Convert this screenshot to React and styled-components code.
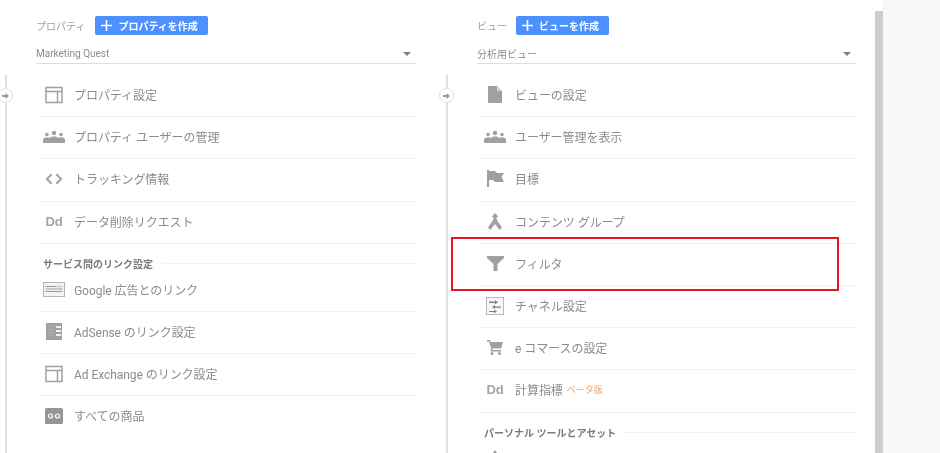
import React from "react";
import styled, { createGlobalStyle } from "styled-components";

const GlobalStyle = createGlobalStyle`
  html, body {
    margin: 0;
    padding: 0;
    background: #fff;
  }
  body {
    font-family: Roboto, "Noto Sans CJK JP", sans-serif;
  }
`;

const Page = styled.div`
  position: relative;
  display: flex;
  width: 940px;
  height: 453px;
  overflow: hidden;
  background: #fff;
`;

const Main = styled.div`
  display: flex;
  gap: 31px;
  width: 875px;
  box-sizing: border-box;
  padding: 16px 0 0 6px;
  filter: blur(0.5px);
`;

const Column = styled.section`
  width: ${(p) => p.$width}px;
  flex: none;
`;

const ColumnHead = styled.div`
  padding-left: 30px;
`;

const TitleRow = styled.div`
  display: flex;
  align-items: center;
  gap: ${(p) => p.$gap}px;
  height: 19px;
`;

const TitleLabel = styled.span`
  font-size: 10px;
  color: #a0a0a0;
`;

const CreateButton = styled.button`
  display: flex;
  align-items: center;
  gap: 6px;
  height: 19px;
  padding: 0 10px 0 6px;
  border: 0;
  border-radius: 2px;
  background: #4d90fe;
  color: #fff;
  font-family: inherit;
  font-size: 10px;
  font-weight: 700;
`;

const Picker = styled.div`
  display: flex;
  align-items: center;
  justify-content: space-between;
  height: 20px;
  margin-top: 9px;
  box-sizing: border-box;
  padding: 1px 5px 1px 0;
  border-bottom: 1px solid #ddd;
  font-size: 10px;
  color: #8c8c8c;
`;

const Caret = styled.span`
  width: 0;
  height: 0;
  border-left: 4px solid transparent;
  border-right: 4px solid transparent;
  border-top: 4px solid #808080;
`;

const Rail = styled.div`
  position: relative;
  margin-top: 11px;
  padding-left: 32px;
  height: 400px;
`;

const RailLine = styled.div`
  position: absolute;
  left: -1px;
  top: 0;
  bottom: 0;
  width: 2px;
  background: #e0e0e0;
`;

const RailBadge = styled.div`
  position: absolute;
  left: -8px;
  top: 13px;
  display: flex;
  align-items: center;
  justify-content: center;
  width: 15px;
  height: 15px;
  box-sizing: border-box;
  border: 1px solid #dfdfdf;
  border-radius: 50%;
  background: #fff;
`;

const Row = styled.div`
  display: flex;
  align-items: center;
  height: 42.2px;
  box-sizing: border-box;
  padding: 0 0 2px 7px;
  border-bottom: 1px solid ${(p) => (p.$last ? "transparent" : "#f1f1f1")};
  font-size: 12px;
  letter-spacing: -0.05px;
  color: #8c8c8c;
  white-space: pre;
`;

const IconSlot = styled.span`
  display: flex;
  align-items: center;
  justify-content: center;
  flex: none;
  width: 18px;
  height: 18px;
  margin-right: 11px;
  color: #a0a0a0;
`;

const DdMark = styled.span`
  font-family: "Liberation Sans", sans-serif;
  font-size: 13px;
  font-weight: 700;
  color: #a4a4a4;
`;

const Beta = styled.span`
  margin-left: 4px;
  font-size: 9px;
  color: #f0a468;
`;

const SectionTitle = styled.div`
  display: flex;
  align-items: center;
  gap: 9px;
  height: 26px;
  box-sizing: border-box;
  padding: 14px 0 0 5px;
  font-size: 10px;
  font-weight: 700;
  color: #7a7a7a;
  white-space: pre;
  &::after {
    content: "";
    flex: 1;
    height: 1px;
    background: #f1f1f1;
  }
`;

const ScrollTrack = styled.div`
  flex: none;
  width: 8px;
  margin-top: 11px;
  background: #cdcdcd;
`;

const SidePanel = styled.div`
  flex: 1;
  background: #f8f8f8;
`;

const Highlight = styled.div`
  position: absolute;
  left: 451px;
  top: 237px;
  width: 388px;
  height: 54px;
  box-sizing: border-box;
  border: 2px solid #e5141f;
`;

const icons = {
  layout: (
    <svg width="18" height="18" viewBox="0 0 18 18" fill="none" stroke="currentColor" strokeWidth="1.5">
      <rect x="1" y="1.5" width="16" height="15" />
      <path d="M1 5.500h16M12.500 5.500v11" />
    </svg>
  ),
  people: (
    <svg width="22" height="14" viewBox="0 0 22 14" fill="currentColor" style={{ flex: "none" }}>
      <circle cx="4" cy="4.500" r="1.800" />
      <circle cx="11" cy="3" r="2.200" />
      <circle cx="18" cy="4.500" r="1.800" />
      <path d="M0 13v-3.200c0-1.600 2-2.600 4-2.600 1 0 2 .2 2.700.7C7.800 7 9.500 6.500 11 6.500s3.200.5 4.300 1.400c.7-.5 1.700-.7 2.700-.7 2 0 4 1 4 2.600V13z" />
    </svg>
  ),
  code: (
    <svg width="19" height="12" viewBox="0 0 19 12" fill="none" stroke="currentColor" strokeWidth="2">
      <path d="M7 1 2 6l5 5M12 1l5 5-5 5" />
    </svg>
  ),
  ads: (
    <svg width="22" height="15" viewBox="0 0 22 15" style={{ flex: "none" }}>
      <rect x=".5" y=".5" width="21" height="14" fill="#f3f3f3" stroke="#b4b4b4" />
      <path d="M2.500 4h11v1h-11zM2.500 6.500h17v1h-17zM2.500 9h17v1h-17z" fill="#9a9a9a" />
      <path d="M14 3.500h5.500v2H14z" fill="#d2d2d2" />
    </svg>
  ),
  adsense: (
    <svg width="18" height="17" viewBox="0 0 18 17" fill="currentColor">
      <path d="M1 0h16v17H1z" />
      <path d="M11 3h5v2h-5zM11 7h5v2h-5zM11 11h5v2h-5z" fill="#f2f2f2" />
      <path d="M3 3h6v.7H3zM3 6h6v.7H3zM3 9h6v.7H3zM3 12h6v.7H3z" fill="#b4b4b4" />
    </svg>
  ),
  products: (
    <svg width="18" height="16" viewBox="0 0 18 16">
      <rect width="18" height="16" rx="1.500" fill="#969696" />
      <g fill="none" stroke="#fff" strokeWidth="1.200">
        <circle cx="5.500" cy="8" r="2" />
        <circle cx="12.500" cy="8" r="2" />
      </g>
    </svg>
  ),
  doc: (
    <svg width="14" height="17" viewBox="0 0 14 17" fill="currentColor">
      <path d="M1 0h8l5 5v11a1 1 0 0 1-1 1H1a1 1 0 0 1-1-1V1a1 1 0 0 1 1-1z" />
      <path d="M9 0v5h5z" fill="#d6d6d6" />
    </svg>
  ),
  flag: (
    <svg width="17" height="17" viewBox="0 0 17 17" fill="currentColor">
      <path d="M0 0h2v17H0zM2 1h6l2 2h7l-2.500 4 2.500 5H8l-2-2H2z" />
    </svg>
  ),
  merge: (
    <svg width="14" height="17" viewBox="0 0 14 17" fill="currentColor">
      <path d="M7 0l3.500 4H8.600v2.500L14 14.500 11.700 17 7 11 2.300 17 0 14.500 5.400 6.500V4H3.500z" />
    </svg>
  ),
  funnel: (
    <svg width="17" height="15" viewBox="0 0 17 15" fill="currentColor">
      <path d="M0 0h17v2l-6.500 6v7h-4V8L0 2z" />
    </svg>
  ),
  channel: (
    <svg width="18" height="18" viewBox="0 0 18 18">
      <rect x=".5" y=".5" width="17" height="17" fill="#f8f8f8" stroke="#b8b8b8" />
      <path d="M3 4.500h6V3l3 2.200-3 2.200V6H3zM15 9.500H9V8L6 10l3 2v-1.200h6zM3 14h5v-1.300l3 1.800-3 1.800V15H3z" fill="#808080" />
    </svg>
  ),
  cart: (
    <svg width="16" height="15" viewBox="0 0 16 15" fill="currentColor">
      <path d="M0 0h3l.6 2H16l-1.800 6.500H5.200L5.600 10H14v1.500H3.500L4 8 2 1.500H0z" />
      <circle cx="5" cy="13.500" r="1.500" />
      <circle cx="12.500" cy="13.500" r="1.500" />
    </svg>
  ),
  peek: (
    <svg width="14" height="16" viewBox="0 0 14 16" fill="currentColor">
      <path d="M7 0l2 3H5z" />
    </svg>
  ),
};

function ItemRow({ icon, text, beta, last }) {
  return (
    <Row $last={last}>
      <IconSlot>{icon === "dd" ? <DdMark>Dd</DdMark> : icons[icon]}</IconSlot>
      {text}
      {beta && <Beta>{beta}</Beta>}
    </Row>
  );
}

function SettingsColumn({ title, titleGap, width, button, picker, groups }) {
  return (
    <Column $width={width}>
      <ColumnHead>
        <TitleRow $gap={titleGap}>
          <TitleLabel>{title}</TitleLabel>
          <CreateButton type="button">
            <svg width="11" height="11" viewBox="0 0 11 11" fill="none" stroke="#fff" strokeWidth="1.600">
              <path d="M5.500 0v11M0 5.500h11" />
            </svg>
            {button}
          </CreateButton>
        </TitleRow>
        <Picker>
          {picker}
          <Caret />
        </Picker>
      </ColumnHead>
      <Rail>
        <RailLine />
        <RailBadge>
          <svg width="7" height="6" viewBox="0 0 7 6" fill="#9a9a9a">
            <path d="M0 2h3.500V0L7 3 3.500 6V4H0z" />
          </svg>
        </RailBadge>
        {groups.map((group) => (
          <React.Fragment key={group.title || "main"}>
            {group.title && <SectionTitle>{group.title}</SectionTitle>}
            {group.rows.map((row) => (
              <ItemRow key={row.icon + row.text} {...row} />
            ))}
          </React.Fragment>
        ))}
      </Rail>
    </Column>
  );
}

const propertyGroups = [
  {
    rows: [
      { icon: "layout", text: "プロパティ設定" },
      { icon: "people", text: "プロパティ ユーザーの管理" },
      { icon: "code", text: "トラッキング情報" },
      { icon: "dd", text: "データ削除リクエスト" },
    ],
  },
  {
    title: "サービス間のリンク設定",
    rows: [
      { icon: "ads", text: "Google 広告とのリンク" },
      { icon: "adsense", text: "AdSense のリンク設定" },
      { icon: "layout", text: "Ad Exchange のリンク設定" },
      { icon: "products", text: "すべての商品", last: true },
    ],
  },
];

const viewGroups = [
  {
    rows: [
      { icon: "doc", text: "ビューの設定" },
      { icon: "people", text: "ユーザー管理を表示" },
      { icon: "flag", text: "目標" },
      { icon: "merge", text: "コンテンツ グループ" },
      { icon: "funnel", text: "フィルタ" },
      { icon: "channel", text: "チャネル設定" },
      { icon: "cart", text: "e コマースの設定" },
      { icon: "dd", text: "計算指標", beta: "ベータ版" },
    ],
  },
  {
    title: "パーソナル ツールとアセット",
    rows: [{ icon: "peek", text: "", last: true }],
  },
];

export default function App() {
  return (
    <Page>
      <GlobalStyle />
      <Main>
        <SettingsColumn
          title="プロパティ"
          titleGap={10}
          width={410}
          button="プロパティを作成"
          picker="Marketing Quest"
          groups={propertyGroups}
        />
        <SettingsColumn
          title="ビュー"
          titleGap={9}
          width={409}
          button="ビューを作成"
          picker="分析用ビュー"
          groups={viewGroups}
        />
      </Main>
      <ScrollTrack />
      <SidePanel />
      <Highlight />
    </Page>
  );
}
